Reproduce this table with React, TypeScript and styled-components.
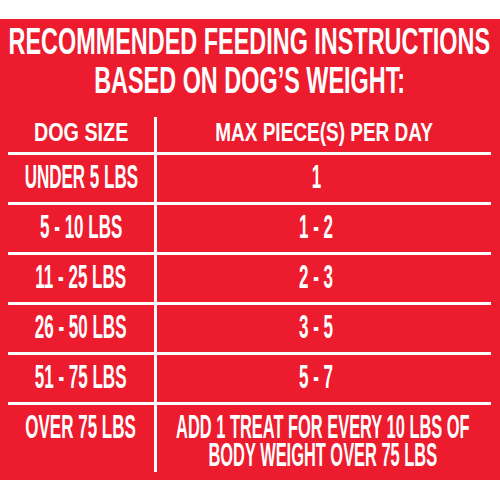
import React from 'react';
import styled, { createGlobalStyle } from 'styled-components';

const Global = createGlobalStyle`
  html, body { margin: 0; padding: 0; background: #ffffff; }
  body { font-family: "Liberation Sans", Arial, sans-serif; }
`;

const Page = styled.div`
  width: 500px;
  height: 500px;
  padding-top: 19px;
  box-sizing: border-box;
  overflow: hidden;
`;

const Panel = styled.section`
  background: #ed1b2e;
  height: 461px;
  box-sizing: border-box;
  padding: 3px 9px 8px 8px;
  display: flex;
  flex-direction: column;
  color: #ffffff;
`;

const Title = styled.h1`
  margin: 0;
  font: 700 37px/39px "Liberation Sans", Arial, sans-serif;
  display: flex;
  flex-direction: column;
  align-items: center;
`;

const Squeeze = styled.span<{ $sx: number }>`
  display: inline-block;
  white-space: nowrap;
  transform: scaleX(${(p) => p.$sx});
  transform-origin: center;
`;

const Table = styled.div`
  margin-top: 17px;
  display: flex;
  flex-direction: column;
`;

const Row = styled.div<{ $h: number; $last?: boolean }>`
  display: grid;
  grid-template-columns: 149px minmax(0, 1fr);
  height: ${(p) => p.$h}px;
  box-sizing: border-box;
  border-bottom: ${(p) => (p.$last ? 'none' : '3px solid #ffffff')};
`;

const Cell = styled.div<{ $first?: boolean; $top?: boolean; $head?: boolean; $shift?: number }>`
  display: flex;
  flex-direction: column;
  align-items: center;
  justify-content: ${(p) => (p.$top ? 'flex-start' : 'center')};
  min-width: 0;
  box-sizing: border-box;
  border-right: ${(p) => (p.$first ? '3px solid #ffffff' : 'none')};
  padding-top: ${(p) => (p.$top ? '7px' : '0')};
  padding-bottom: ${(p) => (p.$top ? '0' : '5px')};
  padding-right: ${(p) => p.$shift ?? 0}px;
  font: ${(p) => (p.$head ? '700 26px/26px' : '700 34px/28px')} "Liberation Sans", Arial, sans-serif;
`;

const rows: [string, string][] = [
  ['UNDER 5 LBS', '1'],
  ['5 - 10 LBS', '1 - 2'],
  ['11 - 25 LBS', '2 - 3'],
  ['26 - 50 LBS', '3 - 5'],
  ['51 - 75 LBS', '5 - 7'],
];

const BODY = 0.5;

export default function App() {
  return (
    <Page>
      <Global />
      <Panel>
        <Title>
          <Squeeze $sx={0.633}>RECOMMENDED FEEDING INSTRUCTIONS</Squeeze>
          <Squeeze $sx={0.633}>BASED ON DOG’S WEIGHT:</Squeeze>
        </Title>
        <Table>
          <Row $h={38}>
            <Cell $first $head>
              <Squeeze $sx={0.76}>DOG SIZE</Squeeze>
            </Cell>
            <Cell $head>
              <Squeeze $sx={0.73}>MAX PIECE(S) PER DAY</Squeeze>
            </Cell>
          </Row>
          {rows.map(([size, qty]) => (
            <Row key={size} $h={50}>
              <Cell $first>
                <Squeeze $sx={BODY}>{size}</Squeeze>
              </Cell>
              <Cell $shift={16}>
                <Squeeze $sx={BODY}>{qty}</Squeeze>
              </Cell>
            </Row>
          ))}
          <Row $h={67} $last>
            <Cell $first $top>
              <Squeeze $sx={BODY}>OVER 75 LBS</Squeeze>
            </Cell>
            <Cell $top $shift={2}>
              <Squeeze $sx={0.483}>ADD 1 TREAT FOR EVERY 10 LBS OF</Squeeze>
              <Squeeze $sx={0.483}>BODY WEIGHT OVER 75 LBS</Squeeze>
            </Cell>
          </Row>
        </Table>
      </Panel>
    </Page>
  );
}
